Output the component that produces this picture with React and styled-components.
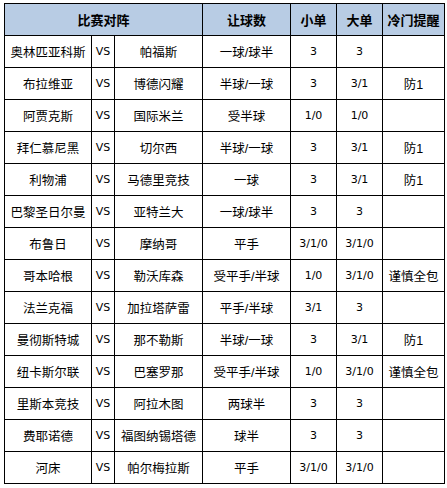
import React from 'react'
import styled, { createGlobalStyle } from 'styled-components'

const GlobalStyle = createGlobalStyle`
  html, body {
    margin: 0;
    padding: 0;
    background: #fff;
  }
  body {
    font-family: "Liberation Sans", "Noto Sans CJK SC", sans-serif;
    color: #000;
  }
`

const Page = styled.div`
  padding: 3px 0 0 4px;
`

const Table = styled.table`
  border-collapse: collapse;
  table-layout: fixed;
  width: 441px;
  border: 1px solid #000;
`

const HeadCell = styled.th`
  height: 31px;
  padding: 0;
  background: #b8cce4;
  border: 1px solid #000;
  font-size: 13px;
  font-weight: bold;
  text-align: center;
`

const Cell = styled.td`
  height: 31px;
  padding: 0;
  border: 1px solid #000;
  font-size: ${props => (props.small ? '11px' : '12.5px')};
  font-family: ${props =>
    props.num
      ? '"DejaVu Sans", "Noto Sans CJK SC", sans-serif'
      : '"Liberation Sans", "Noto Sans CJK SC", sans-serif'};
  text-align: center;
  white-space: nowrap;
  overflow: hidden;
`

const widths = [87, 23, 88, 88, 46, 46, 62]

const rows = [
  ['奥林匹亚科斯', '帕福斯', '一球/球半', '3', '3', ''],
  ['布拉维亚', '博德闪耀', '半球/一球', '3', '3/1', '防1'],
  ['阿贾克斯', '国际米兰', '受半球', '1/0', '1/0', ''],
  ['拜仁慕尼黑', '切尔西', '半球/一球', '3', '3/1', '防1'],
  ['利物浦', '马德里竞技', '一球', '3', '3/1', '防1'],
  ['巴黎圣日尔曼', '亚特兰大', '一球/球半', '3', '3', ''],
  ['布鲁日', '摩纳哥', '平手', '3/1/0', '3/1/0', ''],
  ['哥本哈根', '勒沃库森', '受平手/半球', '1/0', '3/1/0', '谨慎全包'],
  ['法兰克福', '加拉塔萨雷', '平手/半球', '3/1', '3', ''],
  ['曼彻斯特城', '那不勒斯', '半球/一球', '3', '3/1', '防1'],
  ['纽卡斯尔联', '巴塞罗那', '受平手/半球', '1/0', '3/1/0', '谨慎全包'],
  ['里斯本竞技', '阿拉木图', '两球半', '3', '3', ''],
  ['费耶诺德', '福图纳锡塔德', '球半', '3', '3', ''],
  ['河床', '帕尔梅拉斯', '平手', '3/1/0', '3/1/0', ''],
]

export default function App() {
  return (
    <Page>
      <GlobalStyle />
      <Table>
        <colgroup>
          {widths.map((w, i) => (
            <col key={i} style={{ width: w }} />
          ))}
        </colgroup>
        <thead>
          <tr>
            <HeadCell colSpan={3}>比赛对阵</HeadCell>
            <HeadCell>让球数</HeadCell>
            <HeadCell>小单</HeadCell>
            <HeadCell>大单</HeadCell>
            <HeadCell>冷门提醒</HeadCell>
          </tr>
        </thead>
        <tbody>
          {rows.map(([home, away, handicap, small, big, tip], i) => (
            <tr key={i}>
              <Cell>{home}</Cell>
              <Cell small num>VS</Cell>
              <Cell>{away}</Cell>
              <Cell>{handicap}</Cell>
              <Cell num small>{small}</Cell>
              <Cell num small>{big}</Cell>
              <Cell>{tip}</Cell>
            </tr>
          ))}
        </tbody>
      </Table>
    </Page>
  )
}
